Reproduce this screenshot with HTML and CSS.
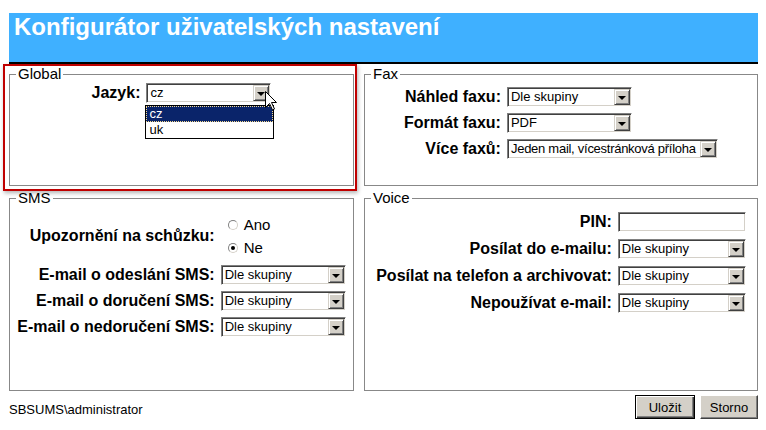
FILE: index.html
```html
<!DOCTYPE html>
<html lang="cs">
<head>
    <meta charset="UTF-8" />
    <meta name="viewport" content="width=device-width, initial-scale=1.0" />
    <title>Konfigurátor uživatelských nastavení</title>
    <link rel="stylesheet" href="styles.css">
</head>
<body>
    <div class="page">
        <div class="header">
            <h1>Konfigurátor uživatelských nastavení</h1>
        </div>

        <div class="panels">
            <div class="highlight">
                <fieldset class="box box-global">
                    <legend>Global</legend>
                    <div class="form">
                        <label class="lbl">Jazyk:</label>
                        <div class="combo">
                            <div class="sel"><span class="val">cz</span><span class="arrow"></span></div>
                            <div class="dropdown">
                                <div class="opt selected">cz</div>
                                <div class="opt">uk</div>
                            </div>
                            <svg class="cursor" width="12" height="20" viewBox="0 0 12 20">
                                <path d="M0.5 0.5 L0.5 16.5 L4.5 12.5 L7.5 19 L9.5 18 L6.5 11.5 L11.5 11.5 Z" fill="#fff" stroke="#000" stroke-width="1" />
                            </svg>
                        </div>
                    </div>
                </fieldset>
            </div>

            <fieldset class="box box-fax">
                <legend>Fax</legend>
                <div class="form">
                    <label class="lbl">Náhled faxu:</label>
                    <div class="sel"><span class="val">Dle skupiny</span><span class="arrow"></span></div>
                    <label class="lbl">Formát faxu:</label>
                    <div class="sel"><span class="val">PDF</span><span class="arrow"></span></div>
                    <label class="lbl">Více faxů:</label>
                    <div class="sel sel-wide"><span class="val">Jeden mail, vícestránková příloha</span><span class="arrow"></span></div>
                </div>
            </fieldset>

            <fieldset class="box box-sms">
                <legend>SMS</legend>
                <div class="form">
                    <label class="lbl">Upozornění na schůzku:</label>
                    <div class="radios">
                        <div class="radio"><span class="dot"></span>Ano</div>
                        <div class="radio"><span class="dot on"></span>Ne</div>
                    </div>
                    <label class="lbl">E-mail o odeslání SMS:</label>
                    <div class="sel"><span class="val">Dle skupiny</span><span class="arrow"></span></div>
                    <label class="lbl">E-mail o doručení SMS:</label>
                    <div class="sel"><span class="val">Dle skupiny</span><span class="arrow"></span></div>
                    <label class="lbl">E-mail o nedoručení SMS:</label>
                    <div class="sel"><span class="val">Dle skupiny</span><span class="arrow"></span></div>
                </div>
            </fieldset>

            <fieldset class="box box-voice">
                <legend>Voice</legend>
                <div class="form">
                    <label class="lbl">PIN:</label>
                    <div class="txt"></div>
                    <label class="lbl">Posílat do e-mailu:</label>
                    <div class="sel"><span class="val">Dle skupiny</span><span class="arrow"></span></div>
                    <label class="lbl">Posílat na telefon a archivovat:</label>
                    <div class="sel"><span class="val">Dle skupiny</span><span class="arrow"></span></div>
                    <label class="lbl">Nepoužívat e-mail:</label>
                    <div class="sel"><span class="val">Dle skupiny</span><span class="arrow"></span></div>
                </div>
            </fieldset>
        </div>

        <div class="footer">
            <span class="user">SBSUMS\administrator</span>
            <div class="buttons">
                <button class="push default">Uložit</button>
                <button class="push">Storno</button>
            </div>
        </div>
    </div>
</body>
</html>
```

FILE: styles.css
```css
body {
    margin: 0;
    background-color: #ffffff;
    font-family: "Liberation Sans", Arial, sans-serif;
    color: #000;
}

.page {
    width: 749px;
    padding: 13px 0 0 9px;
}

/* title bar */
.header {
    height: 49px;
    background-color: #3fb0ff;
    border-bottom: 2px solid #000;
}

.header h1 {
    margin: 0;
    padding-left: 5px;
    font-size: 24px;
    line-height: 28px;
    font-weight: bold;
    color: #fff;
}

/* fieldsets */
.panels {
    display: grid;
    grid-template-columns: 345px 1fr;
    grid-template-rows: 120px 201px;
    column-gap: 10px;
    row-gap: 4px;
    margin-top: 2px;
}

.box {
    box-sizing: border-box;
    height: 100%;
    min-width: 0;
    margin: 0;
    padding: 0;
    border: 1px solid #888;
}

.box legend {
    margin-left: 6px;
    padding: 0 2px;
    font-size: 15px;
    line-height: 16px;
}

.box-global { padding-top: 1px; }
.box-fax { padding-top: 5px; }
.box-sms { padding-top: 7px; }
.box-voice { padding-top: 6px; }

.highlight {
    position: relative;
}

.highlight::after {
    content: "";
    position: absolute;
    left: -6px;
    top: -2px;
    right: -3px;
    bottom: -5px;
    border: 2px solid #c00000;
    box-shadow: 1px 2px 4px rgba(0, 0, 0, 0.3);
    pointer-events: none;
}

.form {
    display: grid;
    grid-template-columns: auto auto;
    justify-content: center;
    align-items: center;
    column-gap: 6px;
    row-gap: 6px;
}

.box-voice .form {
    row-gap: 7px;
}

.lbl {
    font-size: 16px;
    font-weight: bold;
    text-align: right;
    white-space: nowrap;
}

/* fake windows combo boxes */
.sel, .txt {
    box-sizing: border-box;
    display: flex;
    width: 125px;
    height: 20px;
    padding: 1px;
    background-color: #fff;
    border: 1px solid;
    border-color: #808080 #fff #fff #808080;
    box-shadow: inset 1px 1px 0 #404040, inset -1px -1px 0 #d4d0c8;
}

.sel-wide {
    width: 211px;
}

.box-voice .sel, .txt {
    width: 128px;
}

.sel .val {
    flex: 1;
    overflow: hidden;
    padding-left: 2px;
    font-size: 13px;
    line-height: 16px;
    white-space: nowrap;
}

.sel-wide .val {
    letter-spacing: -0.27px;
}

.arrow {
    box-sizing: border-box;
    display: flex;
    align-items: center;
    justify-content: center;
    width: 16px;
    height: 16px;
    background-color: #d4d0c8;
    border: 1px solid;
    border-color: #d4d0c8 #404040 #404040 #d4d0c8;
    box-shadow: inset 1px 1px 0 #fff, inset -1px -1px 0 #808080;
}

.arrow::after {
    content: "";
    border-top: 4px solid #000;
    border-left: 4px solid transparent;
    border-right: 4px solid transparent;
    margin-top: 1px;
}

.combo {
    position: relative;
}

.dropdown {
    position: absolute;
    left: -1px;
    top: 22px;
    width: 127px;
    background-color: #fff;
    border: 1px solid #000;
    z-index: 2;
}

.opt {
    height: 16px;
    padding-left: 3px;
    font-size: 13px;
    line-height: 16px;
}

.opt.selected {
    background-color: #0a246a;
    color: #fff;
    outline: 1px dotted #f4d88c;
    outline-offset: -1px;
}

.cursor {
    position: absolute;
    left: 119px;
    top: 8px;
    z-index: 3;
}

/* radio buttons */
.radios {
    padding-left: 7px;
}

.radio {
    display: flex;
    align-items: center;
    height: 23px;
    font-size: 15px;
}

.dot {
    box-sizing: border-box;
    display: flex;
    align-items: center;
    justify-content: center;
    width: 10px;
    height: 10px;
    margin-right: 6px;
    border: 1px solid;
    border-color: #808080 #d4d0c8 #d4d0c8 #808080;
    border-radius: 50%;
    background-color: #fff;
}

.dot.on::after {
    content: "";
    width: 4px;
    height: 4px;
    border-radius: 50%;
    background-color: #000;
}

/* bottom bar */
.footer {
    display: flex;
    justify-content: space-between;
    align-items: center;
    margin-top: 4px;
}

.user {
    padding-top: 5px;
    font-size: 13px;
}

.buttons {
    display: flex;
    gap: 5px;
}

.push {
    box-sizing: border-box;
    height: 24px;
    padding: 0;
    font-family: "Liberation Sans", Arial, sans-serif;
    font-size: 13px;
    color: #000;
    background-color: #d4d0c8;
    border: 1px solid;
    border-color: #fff #404040 #404040 #fff;
    box-shadow: inset -1px -1px 0 #808080;
    width: 58px;
}

.push.default {
    width: 60px;
    border-color: #000;
    box-shadow: inset 1px 1px 0 #fff, inset -1px -1px 0 #404040, inset -2px -2px 0 #808080;
}
```
